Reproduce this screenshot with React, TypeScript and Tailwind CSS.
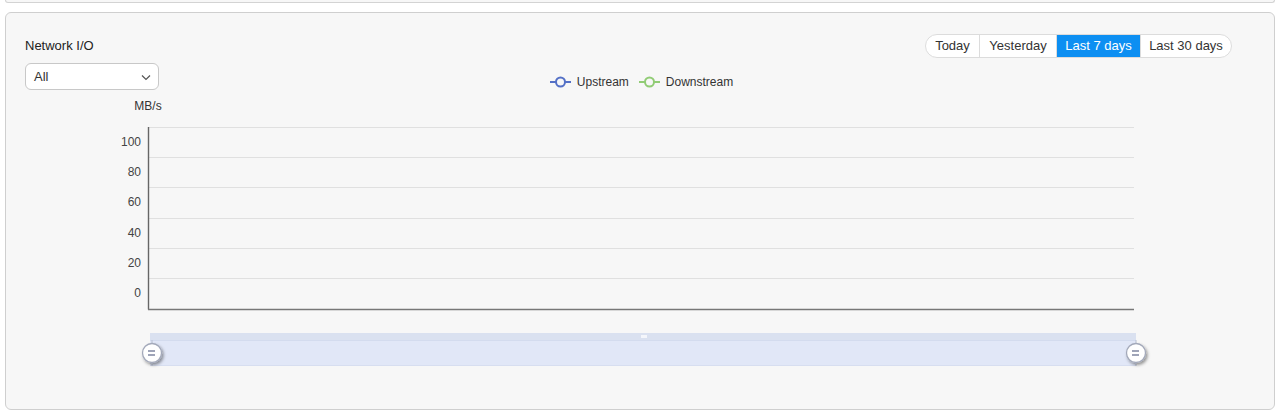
import React, { useState } from 'react';

const RANGES = [
    { label: 'Today', w: 'w-[53px]' },
    { label: 'Yesterday', w: 'w-[77px]' },
    { label: 'Last 7 days', w: 'w-[84px]' },
    { label: 'Last 30 days', w: 'w-[91px]' },
];

// y axis ticks: grid line y (svg coords) and label y
const TICKS = [
    { v: '100', line: 37, label: 53 },
    { v: '80', line: 67, label: 83 },
    { v: '60', line: 97, label: 113 },
    { v: '40', line: 128, label: 144 },
    { v: '20', line: 158, label: 174 },
    { v: '0', line: 188, label: 204 },
];

const Handle: React.FC<{ x: number; y: number }> = ({ x, y }) => (
    <g>
        <line x1={x} y1={y - 13} x2={x} y2={y + 13} stroke="#b9c0d2" strokeWidth={1} />
        <circle cx={x} cy={y} r={9.5} fill="#ffffff" stroke="#a3a9ba" strokeWidth={1.3} filter="url(#hshadow)" />
        <line x1={x - 4} y1={y - 2} x2={x + 3} y2={y - 2} stroke="#7f86a0" strokeWidth={1.5} />
        <line x1={x - 4} y1={y + 2} x2={x + 3} y2={y + 2} stroke="#7f86a0" strokeWidth={1.5} />
    </g>
);

const LegendIcon: React.FC<{ color: string }> = ({ color }) => (
    <svg width="21" height="12" viewBox="0 0 21 12">
        <line x1="0" y1="6" x2="21" y2="6" stroke={color} strokeWidth="2" />
        <circle cx="10.5" cy="6" r="4.5" fill="#f7f7f7" stroke={color} strokeWidth="2" />
    </svg>
);

const App: React.FC = () => {
    const [range, setRange] = useState('Last 7 days');

    return (
        <div className="h-[412px] bg-white overflow-hidden" style={{ fontFamily: '"Liberation Sans", Arial, sans-serif' }}>
            <div className="mx-[5px] h-[3px] border-x border-b border-[#d3d3d3] rounded-b-md bg-[#f7f7f7]" />

            <div className="mx-[5px] mt-[9px] h-[398px] border border-[#cfcfcf] rounded-md bg-[#f7f7f7] overflow-hidden">
                <div className="grid grid-cols-[1fr_auto_1fr]">
                    <div className="pl-[19px] pt-[24px]">
                        <div className="text-[13px] leading-[18px] text-[#222]">Network I/O</div>
                        <div className="mt-[8px] w-[134px] h-[27px] bg-white border border-[#c8c8c8] rounded-md flex items-center justify-between pl-[8px] pr-[6px] text-[13px] text-[#333]">
                            <span>All</span>
                            <svg width="12" height="12" viewBox="0 0 12 12">
                                <path d="M2 4.5 L6 8.5 L10 4.5" fill="none" stroke="#555" strokeWidth="1.2" />
                            </svg>
                        </div>
                    </div>

                    <div className="pt-[61px] pl-[3px] flex items-center gap-[10px] text-[12px] leading-4 text-[#333]">
                        <div className="flex items-center gap-[6px]">
                            <LegendIcon color="#5470c6" />
                            <span>Upstream</span>
                        </div>
                        <div className="flex items-center gap-[6px]">
                            <LegendIcon color="#91cc75" />
                            <span>Downstream</span>
                        </div>
                    </div>

                    <div className="pr-[42px] pt-[21px] flex justify-end items-start">
                        <div className="flex h-[24px] rounded-full border border-[#dcdcdc] bg-white overflow-hidden text-[13px]">
                            {RANGES.map((r, i) => (
                                <button
                                    key={r.label}
                                    onClick={() => setRange(r.label)}
                                    className={`${r.w} h-full flex items-center justify-center ${i > 0 ? 'border-l border-[#dcdcdc]' : ''} ${range === r.label ? 'bg-[#0d8ff2] text-white' : 'text-[#333]'}`}
                                >
                                    {r.label}
                                </button>
                            ))}
                        </div>
                    </div>
                </div>

                <svg width="1269" height="290" viewBox="0 0 1269 290" className="block">
                    <defs>
                        <filter id="hshadow" x="-60%" y="-60%" width="220%" height="220%">
                            <feDropShadow dx="1.5" dy="2" stdDeviation="1.6" floodColor="#000" floodOpacity="0.4" />
                        </filter>
                    </defs>

                    <text x="142" y="17" textAnchor="middle" dominantBaseline="middle" fontSize="12" fill="#333">MB/s</text>

                    {TICKS.map(t => (
                        <g key={t.v}>
                            <line x1="143" y1={t.line + 0.5} x2="1128" y2={t.line + 0.5} stroke="#e0e0e0" strokeWidth="1" />
                            <text x="135" y={t.label} textAnchor="end" dominantBaseline="middle" fontSize="12" fill="#444">{t.v}</text>
                        </g>
                    ))}

                    <line x1="142.5" y1="37" x2="142.5" y2="219.5" stroke="#666" strokeWidth="1.4" />
                    <line x1="142" y1="219.5" x2="1128" y2="219.5" stroke="#777" strokeWidth="1.6" />

                    <rect x="144" y="243" width="986" height="33" fill="#e1e7f7" />
                    <rect x="144" y="243" width="986" height="7" fill="#dae1f0" />
                    <line x1="144" y1="250.5" x2="1130" y2="250.5" stroke="#d3dbee" strokeWidth="1" />
                    <line x1="144" y1="275.5" x2="1130" y2="275.5" stroke="#d7def0" strokeWidth="1" />
                    <rect x="635" y="245" width="6" height="3" fill="#f4f6fb" />

                    <Handle x={146} y={263} />
                    <Handle x={1130} y={263} />
                </svg>
            </div>
        </div>
    );
};

export default App;
